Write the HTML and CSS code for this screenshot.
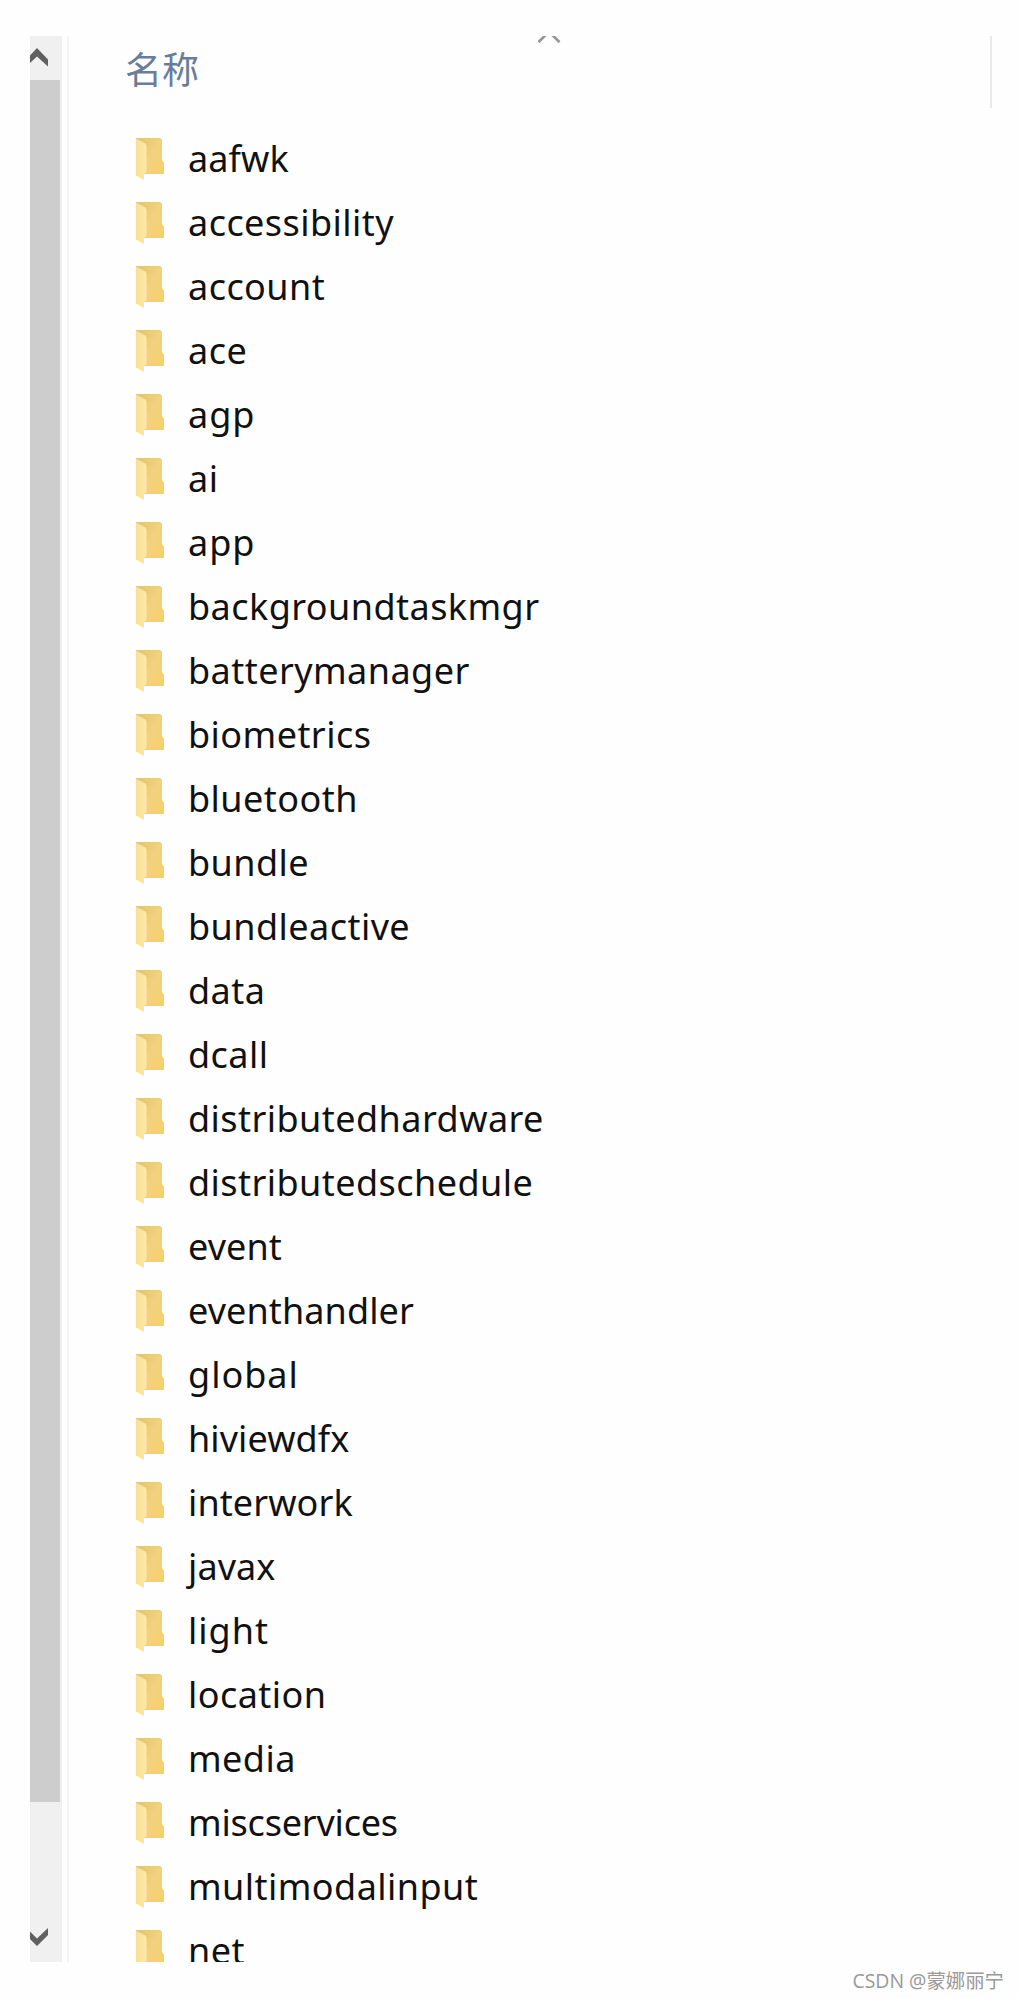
FILE: index.html
```html
<!DOCTYPE html>
<html lang="zh-CN">
<head>
<meta charset="utf-8">
<title>名称</title>
<link rel="stylesheet" href="styles.css">
</head>
<body>
<svg class="defs" width="0" height="0" aria-hidden="true">
  <defs>
    <linearGradient id="back" x1="0" y1="0" x2="1" y2="1"><stop offset="0" stop-color="#e6c36c"/><stop offset=".5" stop-color="#f2d27e"/><stop offset="1" stop-color="#f6cf6c"/></linearGradient>
    <linearGradient id="flap" x1="0" y1="0" x2="1" y2="0"><stop offset="0" stop-color="#fbe093"/><stop offset="1" stop-color="#fee9ac"/></linearGradient>
    <symbol id="folder" viewBox="0 0 28 43">
      <path d="M0 0H24.5L26 2V22L28 25V36H0Z" fill="url(#back)"/>
      <path d="M0 0.5L9 5.5Q10.5 6.5 10.5 8V33Q10.500 35 8 35.500V42L0 37.500Z" fill="url(#flap)"/>
    </symbol>
  </defs>
</svg>
<div class="window">
  <div class="scrollbar">
    <svg class="arrow" viewBox="0 0 32 44"><path d="M0 19.500L7 12L18 23.500V30.500L7 20.500L0 27Z"/></svg>
    <div class="thumb"></div>
    <svg class="arrow down" viewBox="0 0 32 44"><path d="M0 13.500L7 20.500L18 10V17L7 28L0 21Z"/></svg>
  </div>
  <main class="pane">
    <header class="head"><span class="title">名称</span><svg class="sort" viewBox="0 0 24 8"><path d="M1.500 6.200L12 -4.300L22.500 6.200"/></svg></header>
    <ul class="list">
      <li class="tight"><svg><use href="#folder"/></svg><span>aafwk</span></li>
      <li><svg><use href="#folder"/></svg><span>accessibility</span></li>
      <li><svg><use href="#folder"/></svg><span>account</span></li>
      <li><svg><use href="#folder"/></svg><span>ace</span></li>
      <li class="wide"><svg><use href="#folder"/></svg><span>agp</span></li>
      <li><svg><use href="#folder"/></svg><span>ai</span></li>
      <li class="wide"><svg><use href="#folder"/></svg><span>app</span></li>
      <li><svg><use href="#folder"/></svg><span>backgroundtaskmgr</span></li>
      <li><svg><use href="#folder"/></svg><span>batterymanager</span></li>
      <li><svg><use href="#folder"/></svg><span>biometrics</span></li>
      <li><svg><use href="#folder"/></svg><span>bluetooth</span></li>
      <li><svg><use href="#folder"/></svg><span>bundle</span></li>
      <li><svg><use href="#folder"/></svg><span>bundleactive</span></li>
      <li><svg><use href="#folder"/></svg><span>data</span></li>
      <li><svg><use href="#folder"/></svg><span>dcall</span></li>
      <li><svg><use href="#folder"/></svg><span>distributedhardware</span></li>
      <li><svg><use href="#folder"/></svg><span>distributedschedule</span></li>
      <li class="tight"><svg><use href="#folder"/></svg><span>event</span></li>
      <li class="tight"><svg><use href="#folder"/></svg><span>eventhandler</span></li>
      <li class="wide"><svg><use href="#folder"/></svg><span>global</span></li>
      <li class="tight"><svg><use href="#folder"/></svg><span>hiviewdfx</span></li>
      <li class="tight"><svg><use href="#folder"/></svg><span>interwork</span></li>
      <li class="tight"><svg><use href="#folder"/></svg><span>javax</span></li>
      <li class="wide"><svg><use href="#folder"/></svg><span>light</span></li>
      <li><svg><use href="#folder"/></svg><span>location</span></li>
      <li><svg><use href="#folder"/></svg><span>media</span></li>
      <li class="narrow"><svg><use href="#folder"/></svg><span>miscservices</span></li>
      <li><svg><use href="#folder"/></svg><span>multimodalinput</span></li>
      <li><svg><use href="#folder"/></svg><span>net</span></li>
    </ul>
  </main>
</div>
<footer class="credit">CSDN @蒙娜丽宁</footer>
</body>
</html>
```
FILE: styles.css
```css
* { box-sizing: border-box; }
body {
  margin: 0;
  height: 1998px;
  padding: 36px 0 0 30px;
  overflow: hidden;
  background: #fefefe;
  color: #111;
  font-family: "Noto Sans", "Noto Sans CJK SC", sans-serif;
}
.defs { position: absolute; }
.window { display: flex; height: 1926px; overflow: hidden; }
.scrollbar {
  display: flex;
  flex-direction: column;
  width: 32px;
  flex: none;
  background: #f0f0f0;
}
.arrow { display: block; width: 32px; height: 44px; fill: #606060; }
.arrow.down { margin-top: auto; }
.thumb { width: 30px; height: 1722px; background: #cdcdcd; }
.pane { width: 925px; margin-left: 5px; border-left: 2px solid #f5f5f5; }
.head {
  display: flex;
  align-items: flex-start;
  height: 72px;
  padding-left: 56px;
  border-right: 2px solid #e8e8e8;
}
.title {
  width: 412px;
  padding-top: 6px;
  font: 37px/52px "Noto Sans CJK SC", sans-serif;
  color: #687d9b;
}
.sort { width: 24px; height: 8px; fill: none; stroke: #929292; stroke-width: 2.6; }
.list { margin: 0; padding: 30px 0 0 67px; list-style: none; }
.list li { display: flex; align-items: flex-start; height: 64px; }
.list svg { width: 28px; height: 43px; flex: none; }
.list span {
  margin: -11px 0 0 24px;
  font-size: 36px;
  line-height: 64px;
  letter-spacing: 0.45px;
  white-space: nowrap;
}
.list .tight span { letter-spacing: 0.1px; }
.list .narrow span { letter-spacing: -0.2px; }
.list .wide span { letter-spacing: 1px; }
.credit {
  padding: 5px 14px 0 0;
  text-align: right;
  font-family: "Open Sans", "Noto Sans CJK SC", sans-serif;
  font-size: 19.4px;
  line-height: 28px;
  color: #999;
}
```
